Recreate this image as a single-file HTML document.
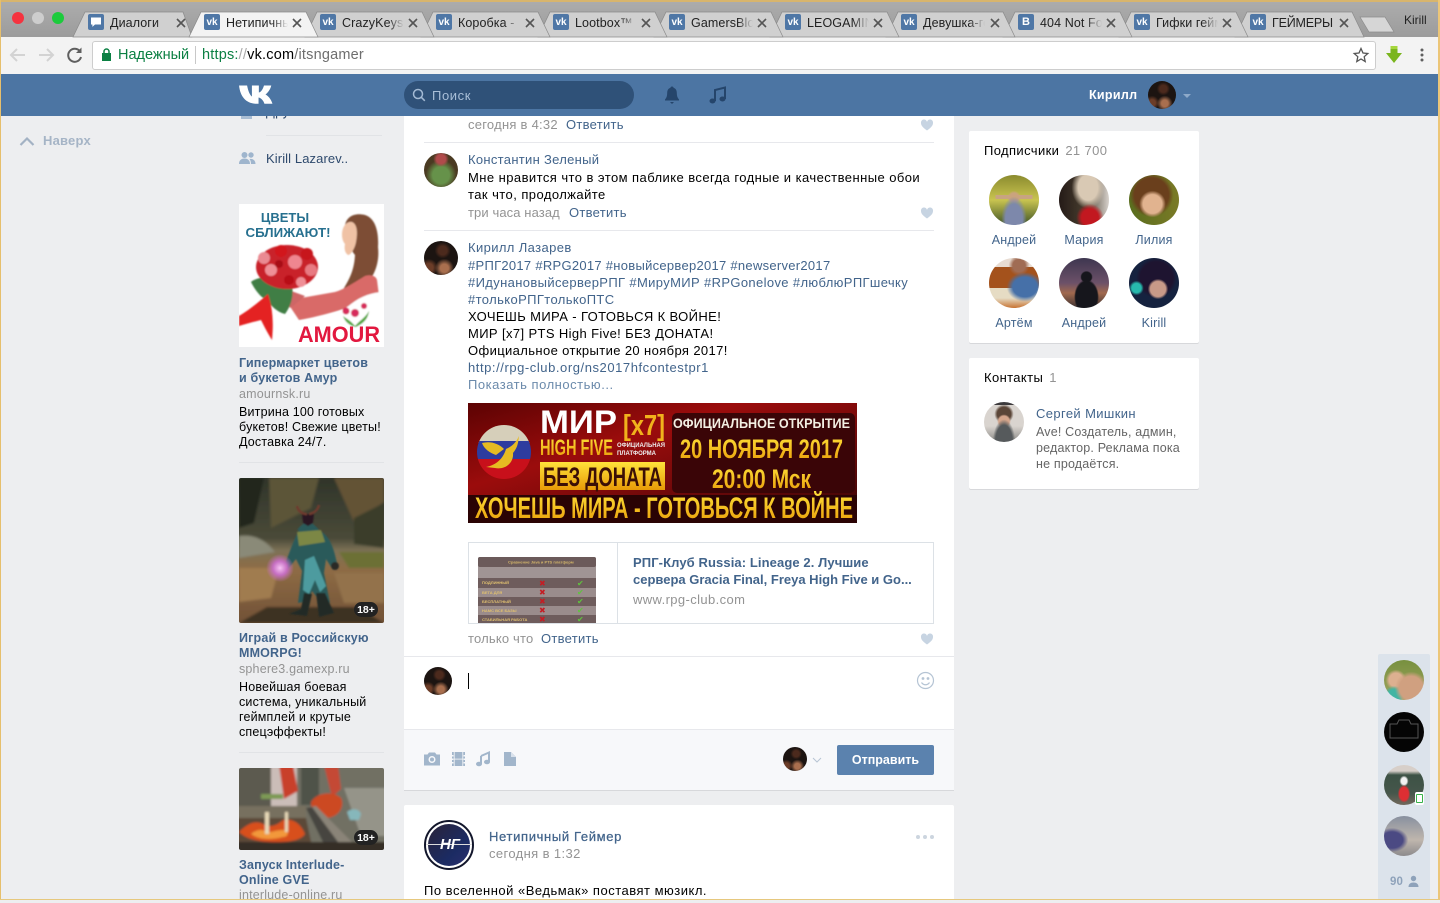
<!DOCTYPE html>
<html lang="ru"><head><meta charset="utf-8"><title>Нетипичный Геймер</title>
<style>
html,body{margin:0;padding:0}
body{width:1440px;height:900px;overflow:hidden;position:relative;background:#edeef0;font-family:"Liberation Sans","Noto Sans CJK SC",sans-serif;font-size:13px;color:#000}
.a{position:absolute}
.t{position:absolute;white-space:nowrap;line-height:16px;height:16px;letter-spacing:.38px}
.l{color:#42648b}.g{color:#939393}.b{font-weight:bold}
.t.b{letter-spacing:.05px}
.t.s{font-size:12.5px;letter-spacing:.18px}
.t.b.s{letter-spacing:.17px}
.tab{position:absolute;top:14px;font-size:12.5px;line-height:18px;color:#222;white-space:nowrap;overflow:hidden;width:62px;letter-spacing:.1px}
.tab:after{content:"";position:absolute;right:0;top:0;bottom:0;width:16px;background:linear-gradient(90deg,rgba(208,208,208,0),#d0d0d0)}
.tab.on:after{background:linear-gradient(90deg,rgba(243,243,243,0),#f3f3f3)}
.tab.full:after{display:none}
.fav{position:absolute;top:14px;width:16px;height:16px;border-radius:2px;background:#4f77a6;color:#fff;font-size:10px;font-weight:bold;line-height:17px;text-align:center}
.x{position:absolute;top:18px}
.av{position:absolute;border-radius:50%;overflow:hidden}
.me{background:radial-gradient(circle at 60% 80%,#a96f4e 0 12%,transparent 28%),radial-gradient(circle at 55% 28%,#4c2a1d 0 14%,transparent 26%),radial-gradient(circle at 15% 78%,#6c3d28 0 10%,transparent 22%),#1c1411}
.n{position:absolute;width:70px;text-align:center;line-height:16px;color:#42648b;font-size:12.5px;letter-spacing:.2px}
.hr{position:absolute;height:1px;background:#e7e8ec}
</style></head><body>

<!-- chrome -->
<div class="a" style="left:0;top:0;width:1440px;height:37px;background:linear-gradient(#adadad,#9c9c9c)"></div>
<div class="a" style="left:0;top:37px;width:1440px;height:37px;background:#f3f3f3"></div>
<svg class="a" style="left:0;top:0" width="1440" height="38">
<path d="M1369 32 1360 17H1385L1394 32Z" fill="#d6d6d6" stroke="#8c8c8c" stroke-width=".7"/>
<g fill="#d0d0d0" stroke="#8a8a8a" stroke-width=".7">
<path transform="translate(1235 12)" d="M0 25 12 0H117L129 25Z"/>
<path transform="translate(1119 12)" d="M0 25 12 0H117L129 25Z"/>
<path transform="translate(1003 12)" d="M0 25 12 0H117L129 25Z"/>
<path transform="translate(886 12)" d="M0 25 12 0H117L129 25Z"/>
<path transform="translate(770 12)" d="M0 25 12 0H117L129 25Z"/>
<path transform="translate(654 12)" d="M0 25 12 0H117L129 25Z"/>
<path transform="translate(538 12)" d="M0 25 12 0H117L129 25Z"/>
<path transform="translate(421 12)" d="M0 25 12 0H117L129 25Z"/>
<path transform="translate(305 12)" d="M0 25 12 0H117L129 25Z"/>
<path transform="translate(73 12)" d="M0 25 12 0H110L119 25Z"/>
<path transform="translate(189 12)" d="M0 25 12 0H117L129 25Z" fill="#f3f3f3"/>
</g>
<circle cx="18" cy="18" r="6" fill="#f5333f"/><circle cx="38" cy="18" r="6" fill="#cdcdcd"/><circle cx="58" cy="18" r="6" fill="#1ccb3c"/>
</svg>
<div class="fav" style="left:88px"><svg width="16" height="16"><path d="M3 3.5h10v7H7l-2.6 2.4V10.500H3Z" fill="#fff"/></svg></div>
<div class="fav" style="left:204px">vk</div><div class="fav" style="left:320px">vk</div><div class="fav" style="left:436px">vk</div><div class="fav" style="left:553px">vk</div><div class="fav" style="left:669px">vk</div><div class="fav" style="left:785px">vk</div><div class="fav" style="left:901px">vk</div><div class="fav" style="left:1018px;font-size:11px">В</div><div class="fav" style="left:1134px">vk</div><div class="fav" style="left:1250px">vk</div>
<div class="tab" style="left:110px">Диалоги</div>
<div class="tab on" style="left:226px">Нетипичный</div>
<div class="tab" style="left:342px">CrazyKeys</div>
<div class="tab" style="left:458px">Коробка - </div>
<div class="tab" style="left:575px">Lootbox™ M</div>
<div class="tab" style="left:691px">GamersBlog</div>
<div class="tab" style="left:807px">LEOGAMING</div>
<div class="tab" style="left:923px">Девушка-гей</div>
<div class="tab" style="left:1040px">404 Not Found</div>
<div class="tab" style="left:1156px">Гифки геймеры</div>
<div class="tab full" style="left:1272px;width:64px;letter-spacing:-.2px">ГЕЙМЕРЫ</div>
<svg class="x" style="left:176px" width="10" height="10"><path d="M1 1l8 8M9 1l-8 8" stroke="#555" stroke-width="1.600"/></svg>
<svg class="x" style="left:292px" width="10" height="10"><path d="M1 1l8 8M9 1l-8 8" stroke="#555" stroke-width="1.600"/></svg>
<svg class="x" style="left:408px" width="10" height="10"><path d="M1 1l8 8M9 1l-8 8" stroke="#555" stroke-width="1.600"/></svg>
<svg class="x" style="left:525px" width="10" height="10"><path d="M1 1l8 8M9 1l-8 8" stroke="#555" stroke-width="1.600"/></svg>
<svg class="x" style="left:641px" width="10" height="10"><path d="M1 1l8 8M9 1l-8 8" stroke="#555" stroke-width="1.600"/></svg>
<svg class="x" style="left:757px" width="10" height="10"><path d="M1 1l8 8M9 1l-8 8" stroke="#555" stroke-width="1.600"/></svg>
<svg class="x" style="left:873px" width="10" height="10"><path d="M1 1l8 8M9 1l-8 8" stroke="#555" stroke-width="1.600"/></svg>
<svg class="x" style="left:990px" width="10" height="10"><path d="M1 1l8 8M9 1l-8 8" stroke="#555" stroke-width="1.600"/></svg>
<svg class="x" style="left:1106px" width="10" height="10"><path d="M1 1l8 8M9 1l-8 8" stroke="#555" stroke-width="1.600"/></svg>
<svg class="x" style="left:1222px" width="10" height="10"><path d="M1 1l8 8M9 1l-8 8" stroke="#555" stroke-width="1.600"/></svg>
<svg class="x" style="left:1339px" width="10" height="10"><path d="M1 1l8 8M9 1l-8 8" stroke="#555" stroke-width="1.600"/></svg>
<div class="a" style="left:1404px;top:12px;font-size:12px;line-height:16px;color:#222">Kirill</div>
<svg class="a" style="left:0;top:37px" width="92" height="37" fill="none" stroke-width="2">
<path d="M25 18H11M17 12l-6 6 6 6" stroke="#d3d3d3"/><path d="M39 18H53M47 12l6 6-6 6" stroke="#d3d3d3"/>
<path d="M80 14.500A6.500 6.500 0 1 0 81 20" stroke="#5f5f5f"/><path d="M81.500 10.500v5.500h-5.500Z" fill="#5f5f5f"/>
</svg>
<div class="a" style="left:92px;top:41px;width:1282px;height:27px;background:#fff;border:1px solid #cdcdcd;border-radius:3px"></div>
<svg class="a" style="left:100px;top:47px" width="14" height="16"><rect x="2" y="6" width="9" height="8" fill="#0b8043"/><path d="M4 6V4.500a2.500 2.500 0 0 1 5 0V6" fill="none" stroke="#0b8043" stroke-width="1.500"/></svg>
<div class="a" style="left:118px;top:47px;line-height:16px;white-space:nowrap;font-size:14.5px;color:#0b8043">Надежный</div>
<div class="a" style="left:195px;top:46px;width:1px;height:18px;background:#c8c8c8"></div>
<div class="a" style="left:202px;top:47px;line-height:16px;white-space:nowrap;font-size:14.5px;letter-spacing:.2px;color:#5c5c5c"><span style="color:#0b8043">https:</span><span style="color:#aaa">//</span><span style="color:#000">vk.com</span><span style="color:#6e6e6e">/itsngamer</span></div>
<svg class="a" style="left:1352px;top:46px" width="18" height="18"><path d="M9 2.500l2 4.500 4.800.5-3.600 3.200 1 4.800L9 13l-4.200 2.500 1-4.800-3.600-3.200L7 7Z" fill="none" stroke="#555" stroke-width="1.300"/></svg>
<svg class="a" style="left:1385px;top:45px" width="18" height="20"><path d="M5.500 1h7v7H17L9 18 1 8h4.500Z" fill="#7ab51d"/><path d="M5.500 1h7v3h-7Z" fill="#a5d63d"/></svg>
<svg class="a" style="left:1419px;top:47px" width="6" height="16" fill="#5f5f5f"><circle cx="3" cy="3" r="1.500"/><circle cx="3" cy="8" r="1.500"/><circle cx="3" cy="13" r="1.500"/></svg>

<!-- vk header -->
<div class="a" style="left:0;top:74px;width:1440px;height:42px;background:#4c75a3"></div>
<svg class="a" style="left:238px;top:84px" width="36" height="21"><path transform="scale(1.07 1)" d="M1 1.500h7.500C9.500 7 11 11 13 12.500V1.500h6.500v7c2.200-.5 3.800-3.500 4.800-7h6.800c-1 4.500-3.600 7.500-5.400 9 2.200 1.200 5 4 6.500 9.200h-7.500c-1-3.300-3-5.600-5.500-6.200v6.200h-2.200C8 19.700 2 13 1 1.500Z" fill="#fff"/></svg>
<div class="a" style="left:404px;top:81px;width:230px;height:28px;border-radius:14px;background:#2f5178"></div>
<svg class="a" style="left:411px;top:87px" width="16" height="16" fill="none" stroke="#a3bad4" stroke-width="1.500"><circle cx="7" cy="7" r="4.500"/><path d="M10.300 10.300l3.500 3.500"/></svg>
<div class="t" style="left:432px;top:88px;color:#a9bfd8;letter-spacing:.6px">Поиск</div>
<svg class="a" style="left:662px;top:85px" width="20" height="20" fill="#25456b"><path d="M10 1.500c1 0 1.500.6 1.500 1.300 2.300.7 3.300 2.700 3.300 5.200 0 3 .8 5 2.200 6.500v1H3v-1c1.400-1.500 2.200-3.500 2.200-6.500 0-2.500 1-4.500 3.300-5.200 0-.7.500-1.300 1.500-1.300Z"/><path d="M8 17h4l-2 2Z"/></svg>
<svg class="a" style="left:708px;top:85px" width="20" height="20" fill="none" stroke="#25456b" stroke-width="2"><path d="M7 16V5l10-2.500V14"/><ellipse cx="4.500" cy="16" rx="3" ry="2.500" fill="#25456b" stroke="none"/><ellipse cx="14.500" cy="14" rx="3" ry="2.500" fill="#25456b" stroke="none"/></svg>
<div class="t b s" style="left:1089px;top:87px;color:#fff;letter-spacing:.3px">Кирилл</div>
<div class="av me" style="left:1148px;top:81px;width:28px;height:28px"></div>
<div class="a" style="left:1183px;top:94px;border:4px solid transparent;border-top:4px solid #8eaac9;border-bottom:0"></div>

<!-- left -->
<svg class="a" style="left:19px;top:136px" width="16" height="10" fill="none" stroke="#a3b2c4" stroke-width="2.200"><path d="M1.500 9L8 2.500 14.500 9"/></svg>
<div class="t b" style="left:43px;top:133px;color:#a5b4c6;letter-spacing:.2px">Наверх</div>
<div class="a" style="left:241px;top:116px;width:11px;height:3px;background:#a9bdd3"></div>
<div class="a" style="left:266px;top:116px;width:40px;height:3px;overflow:hidden"><div class="t" style="left:0;top:-12px;color:#2f4a6d">Друзья</div></div>
<div class="a" style="left:266px;top:135px;width:116px;height:1px;background:#e1e3e6"></div>
<svg class="a" style="left:239px;top:151px" width="17" height="14" fill="#9fb5cd"><circle cx="5.500" cy="4" r="3"/><circle cx="12" cy="4" r="2.700"/><path d="M0 13c0-3.500 2-5.500 5.500-5.500S11 9.500 11 13ZM12 13c0-2-.5-3.700-1.500-5 3.500-.7 6 1.500 6 5Z"/></svg>
<div class="t" style="left:266px;top:151px;color:#2f4a6d;letter-spacing:.1px">Kirill Lazarev..</div>

<!-- ad 1 -->
<svg class="a" style="left:239px;top:204px" width="145" height="143" viewBox="0 0 145 143" font-family="Liberation Sans,sans-serif">
<defs><filter id="bl" x="-5%" y="-5%" width="110%" height="110%"><feGaussianBlur stdDeviation=".7"/></filter></defs>
<rect width="145" height="143" fill="#fff"/>
<text x="46" y="18" font-size="13" font-weight="bold" fill="#27708f" text-anchor="middle">ЦВЕТЫ</text>
<text x="49" y="33" font-size="13" font-weight="bold" fill="#27708f" text-anchor="middle" textLength="85" lengthAdjust="spacingAndGlyphs">СБЛИЖАЮТ!</text>
<g filter="url(#bl)">
<path d="M106 28C104 14 114 8 126 11c10 3 14 16 13 32 2 18-5 32-16 42-10 6-18 8-22 6 8-14 14-22 15-40-3-4-8-10-10-23Z" fill="#7d4e34"/>
<path d="M103 31c0-9 5-14 10-13 5 2 6 10 4 20-1 6-5 13-8 13-3-2-4-6-3-11-2-2-3-6-3-9Z" fill="#f0c2a5"/>
<path d="M126 72c6-2 11 0 12 4l2 16-28 10c-14 6-40 12-52 14l-8-12 10-10 34-6c8-2 20-10 30-16Z" fill="#d96a68"/>
<path d="M44 84l22 8-14 12-14-8Z" fill="#ce6666"/>
<path d="M54 118c20-2 44-6 58-18 10-8 22-12 33-12v55H54Z" fill="#fff"/>
<path d="M12 78c6-6 30-8 40 0 4 12 0 24-6 32-8-2-14-8-18-14-6-2-12-10-16-18Z" fill="#3f7e45"/>
<ellipse cx="48" cy="63" rx="31" ry="22" fill="#c9202a"/>
<circle cx="25" cy="54" r="6" fill="#ea8a92"/><circle cx="42" cy="47" r="6" fill="#d2141e"/><circle cx="32" cy="66" r="6" fill="#ef8f96"/><circle cx="56" cy="58" r="7" fill="#ef8690"/><circle cx="68" cy="50" r="6" fill="#c7121d"/><circle cx="72" cy="66" r="6" fill="#e87a82"/><circle cx="50" cy="76" r="5" fill="#b81018"/><circle cx="62" cy="78" r="5" fill="#ef8f96"/><circle cx="40" cy="60" r="4" fill="#a80f17"/>
<path d="M0 112c10-6 20-14 29-22 4 12 6 26 4 46-5-8-8-14-11-20-8 2-16 4-22 6Z" fill="#e42321"/>
<g fill="#d72c5c"><circle cx="107" cy="107" r="3.500"/><circle cx="116" cy="109" r="4"/><circle cx="125" cy="102" r="3"/></g>
<path d="M104 112c4 3 8 5 12 10 4-5 10-8 14-15-1 9-7 13-13 16-6-1-11-5-13-11Z" fill="#53a83d"/>
</g>
<text x="59" y="138" font-size="22" font-weight="bold" fill="#e2183f" textLength="82" lengthAdjust="spacingAndGlyphs">AMOUR</text>
</svg>
<div class="t b s l" style="left:239px;top:355px">Гипермаркет цветов</div>
<div class="t b s l" style="left:239px;top:370px">и букетов Амур</div>
<div class="t s g" style="left:239px;top:386px">amournsk.ru</div>
<div class="t s" style="left:239px;top:404px">Витрина 100 готовых</div>
<div class="t s" style="left:239px;top:419px">букетов! Свежие цветы!</div>
<div class="t s" style="left:239px;top:434px">Доставка 24/7.</div>
<div class="a" style="left:239px;top:462px;width:145px;height:1px;background:#e1e3e6"></div>

<!-- ad 2 -->
<svg class="a" style="left:239px;top:478px;border-radius:2px" width="145" height="145" viewBox="0 0 145 145">
<defs><filter id="bl2" x="-5%" y="-5%" width="110%" height="110%"><feGaussianBlur stdDeviation="1.300"/></filter><linearGradient id="g1" x1="0" y1="0" x2="0" y2="1"><stop offset="0" stop-color="#2e3329"/><stop offset=".42" stop-color="#4a4a38"/><stop offset=".5" stop-color="#7c7156"/><stop offset=".62" stop-color="#8e6c45"/><stop offset="1" stop-color="#6f4f35"/></linearGradient><radialGradient id="g2"><stop offset="0" stop-color="#f7c2f3"/><stop offset=".5" stop-color="#c66fc2"/><stop offset="1" stop-color="#c66fc2" stop-opacity="0"/></radialGradient></defs>
<g filter="url(#bl2)">
<rect x="-4" y="-4" width="153" height="153" fill="url(#g1)"/>
<path d="M30 0h50l-8 30-40 20Z" fill="#5c5438"/><path d="M95 0h50v24l-30 20Z" fill="#635235"/><path d="M0 0h25L15 45 0 50Z" fill="#23271f"/>
<path d="M115 40l30-15v45l-30-4Z" fill="#3a3d2c"/>
<path d="M0 58c14-2 26 3 36 16L0 80Z" fill="#8a8a78"/><path d="M100 74h45v16H110Z" fill="#6c7035"/>
<path d="M0 90h40l-8 30-32 4Z" fill="#a07b50"/><path d="M95 95h50v30H105Z" fill="#93724b"/>
<path d="M0 145l28-16h90l27 16Z" fill="#3d3022"/>
</g>
<g filter="url(#bl)">
<path d="M58 52c4-5 8-8 11-8s7 3 12 9c7 3 12 12 15 24l2 8-4 7-7-11-2 14 6 30-10-2-8-10-4 10-10 2 4-32-6-12-8 10-4-3c5-12 10-27 15-36Z" fill="#2a5a5a"/>
<path d="M66 82l9-4 12 30-6 6-5-12-6 14-6-4Z" fill="#4e9b9f"/>
<path d="M58 54l24-2 4 12-26 4Z" fill="#7b8744"/><path d="M63 36h12l-1 9-5 3-5-3Z" fill="#2c1822"/>
<path d="M58 28c1 5 5 8 10 8M80 27c-1 5-5 8-10 9" stroke="#6e3b2d" stroke-width="2.500" fill="none"/>
<path d="M50 136l12-5 3-16 8 1-5 22ZM80 139l-3-24 9 0 9 20Z" fill="#232c27"/>
<circle cx="96" cy="88" r="4" fill="#2a2c28"/>
</g>
<circle cx="41" cy="90" r="14" fill="url(#g2)"/>
<rect x="115" y="124" width="24" height="15" rx="7.500" fill="#222"/><text x="127" y="135" font-family="Liberation Sans,sans-serif" font-size="10.500" font-weight="bold" fill="#fff" text-anchor="middle">18+</text>
</svg>
<div class="t b s l" style="left:239px;top:630px">Играй в Российскую</div>
<div class="t b s l" style="left:239px;top:645px">MMORPG!</div>
<div class="t s g" style="left:239px;top:661px">sphere3.gamexp.ru</div>
<div class="t s" style="left:239px;top:679px">Новейшая боевая</div>
<div class="t s" style="left:239px;top:694px">система, уникальный</div>
<div class="t s" style="left:239px;top:709px">геймплей и крутые</div>
<div class="t s" style="left:239px;top:724px">спецэффекты!</div>
<div class="a" style="left:239px;top:752px;width:145px;height:1px;background:#e1e3e6"></div>

<!-- ad 3 -->
<svg class="a" style="left:239px;top:768px;border-radius:2px" width="145" height="82" viewBox="0 0 145 82">
<defs><filter id="bl3" x="-5%" y="-5%" width="110%" height="110%"><feGaussianBlur stdDeviation="1.100"/></filter></defs>
<g filter="url(#bl3)">
<rect x="-3" y="-3" width="151" height="88" fill="#716f63"/>
<rect x="-3" y="-3" width="35" height="45" fill="#5c5a50"/><rect x="32" y="-3" width="26" height="44" fill="#cbbdb8"/><rect x="62" y="-3" width="18" height="40" fill="#50524a"/>
<path d="M40 -3h14l5 26-14 8Z" fill="#c8402c"/><path d="M85 -3h14l3 24-9 8Z" fill="#c44a36"/>
<path d="M72 34c5-9 22-12 30-4 4 8-2 20-16 20-8 0-14-6-14-16Z" fill="#cc4a20"/>
<path d="M105 20h45v48H122Z" fill="#959489"/><path d="M108 44c4-4 12-4 14 2l-2 6h-9Z" fill="#86b7bb"/>
<rect x="-3" y="38" width="70" height="12" fill="#77705f"/>
<path d="M-3 50h70l6 28H-3Z" fill="#5c4a38"/>
<path d="M0 64c8-8 16-12 24-8 6 3 12 3 20-4 10-2 18 4 22 14-4 6-14 8-28 8-16 0-30-2-38-10Z" fill="#d8501f"/>
<path d="M12 66c6-5 12-5 16-2 5 1 14-4 20-1 2 3 0 6-4 6-12 3-24 3-32-3Z" fill="#f2983a"/>
<path d="M26 44h4v22h-4ZM46 44h3v20h-3Z" fill="#e8d9b8"/>
<path d="M67 40l10-2 44 44H92Z" fill="#8a8478"/><path d="M67 40l6-1 32 43H88Z" fill="#46453f"/>
<path d="M-3 74h150v11H-3Z" fill="#352d26"/>
<rect x="22" y="26" width="22" height="5" fill="#7d9a55"/>
</g>
<rect x="115" y="62" width="24" height="15" rx="7.500" fill="#222"/><text x="127" y="73" font-family="Liberation Sans,sans-serif" font-size="10.500" font-weight="bold" fill="#fff" text-anchor="middle">18+</text>
</svg>
<div class="t b s l" style="left:239px;top:857px">Запуск Interlude-</div>
<div class="t b s l" style="left:239px;top:872px">Online GVE</div>
<div class="t s g" style="left:239px;top:887px">interlude-online.ru</div>

<!-- centre -->
<div class="a" style="left:404px;top:116px;width:550px;height:674px;background:#fff;box-shadow:0 1px 0 #d7d8db"></div>
<div class="t g" style="left:468px;top:117px;letter-spacing:.25px">сегодня в 4:32</div><div class="t l" style="left:566px;top:117px;letter-spacing:.28px">Ответить</div>
<div class="hr" style="left:424px;top:142px;width:510px"></div>
<div class="av" style="left:424px;top:153px;width:34px;height:34px;background:radial-gradient(circle at 50% 18%,#b04b4b 0 14%,transparent 24%),radial-gradient(circle at 50% 65%,#66924a 0 30%,transparent 55%),#4a3a22"></div>
<div class="t l" style="left:468px;top:152px;letter-spacing:.3px">Константин Зеленый</div>
<div class="t" style="left:468px;top:170px;letter-spacing:.44px">Мне нравится что в этом паблике всегда годные и качественные обои</div>
<div class="t" style="left:468px;top:187px;letter-spacing:.44px">так что, продолжайте</div>
<div class="t g" style="left:468px;top:205px;letter-spacing:.1px">три часа назад</div><div class="t l" style="left:569px;top:205px;letter-spacing:.28px">Ответить</div>
<div class="hr" style="left:424px;top:230px;width:510px"></div>
<div class="av me" style="left:424px;top:241px;width:34px;height:34px"></div>
<div class="t l" style="left:468px;top:240px">Кирилл Лазарев</div>
<div class="t l" style="left:468px;top:258px;letter-spacing:.28px">#РПГ2017 #RPG2017 #новыйсервер2017 #newserver2017</div>
<div class="t l" style="left:468px;top:275px;letter-spacing:.36px">#ИдунановыйсерверРПГ #МируМИР #RPGonelove #люблюРПГшечку</div>
<div class="t l" style="left:468px;top:292px">#толькоРПГтолькоПТС</div>
<div class="t" style="left:468px;top:309px">ХОЧЕШЬ МИРА - ГОТОВЬСЯ К ВОЙНЕ!</div>
<div class="t" style="left:468px;top:326px">МИР [x7] PTS High Five! БЕЗ ДОНАТА!</div>
<div class="t" style="left:468px;top:343px">Официальное открытие 20 ноября 2017!</div>
<div class="t l" style="left:468px;top:360px;letter-spacing:.56px">http://rpg-club.org/ns2017hfcontestpr1</div>
<div class="t" style="left:468px;top:377px;color:#6b8aab;letter-spacing:.52px">Показать полностью...</div>
<svg class="a" style="left:920px;top:118px" width="14" height="14" fill="#c7d4e2"><path d="M7 12.500C2 9 1 7 1 5a3 3 0 0 1 6-1 3 3 0 0 1 6 1c0 2-1 4-6 7.500Z"/></svg>
<svg class="a" style="left:920px;top:206px" width="14" height="14" fill="#c7d4e2"><path d="M7 12.500C2 9 1 7 1 5a3 3 0 0 1 6-1 3 3 0 0 1 6 1c0 2-1 4-6 7.500Z"/></svg>
<svg class="a" style="left:920px;top:632px" width="14" height="14" fill="#c7d4e2"><path d="M7 12.500C2 9 1 7 1 5a3 3 0 0 1 6-1 3 3 0 0 1 6 1c0 2-1 4-6 7.500Z"/></svg>

<!-- banner -->
<svg class="a" style="left:468px;top:403px" width="389" height="120" viewBox="0 0 389 120" font-family="Liberation Sans,sans-serif" font-weight="bold">
<defs><linearGradient id="bg" x1="0" x2="1" y1="0" y2="1"><stop offset="0" stop-color="#5c0303"/><stop offset=".35" stop-color="#9b0c0c"/><stop offset="1" stop-color="#370506"/></linearGradient>
<linearGradient id="yl" x1="0" x2="0" y1="0" y2="1"><stop offset="0" stop-color="#ffe23a"/><stop offset="1" stop-color="#e89a07"/></linearGradient>
<clipPath id="ball"><circle cx="36" cy="49" r="27"/></clipPath></defs>
<rect width="389" height="120" fill="url(#bg)"/>
<rect y="92" width="389" height="28" fill="#2a0304"/>
<rect x="204" y="10" width="183" height="80" rx="5" fill="#3a0507"/>
<g clip-path="url(#ball)"><rect x="9" y="22" width="54" height="18" fill="#d6cfba"/><rect x="9" y="38" width="54" height="18" fill="#2e3c9f"/><rect x="9" y="56" width="54" height="20" fill="#c8101b"/></g>
<path d="M18 64c10-2 17-8 20-18 5-2 10-6 13-13-1 9-2 12-6 17 1 10-8 17-18 15Z M14 40c8-2 16 0 22 6l-8 6c-6-2-12-6-14-12Z" fill="#e6bb22"/>
<text x="72" y="30" font-size="32" fill="#fff" textLength="77" lengthAdjust="spacingAndGlyphs">МИР</text>
<text x="155" y="32" font-size="29" fill="#f1b21c" textLength="42" lengthAdjust="spacingAndGlyphs">[x7]</text>
<text x="72" y="52" font-size="22" fill="url(#yl)" textLength="73" lengthAdjust="spacingAndGlyphs">HIGH FIVE</text>
<text x="149" y="44" font-size="6" fill="#eee" textLength="48" lengthAdjust="spacingAndGlyphs">ОФИЦИАЛЬНАЯ</text>
<text x="149" y="52" font-size="6" fill="#eee" textLength="39" lengthAdjust="spacingAndGlyphs">ПЛАТФОРМА</text>
<rect x="72" y="59" width="125" height="28" fill="url(#yl)"/>
<text x="75" y="83" font-size="27" fill="#3b0f06" textLength="119" lengthAdjust="spacingAndGlyphs">БЕЗ ДОНАТА</text>
<text x="205" y="25" font-size="14" fill="#f3efe3" textLength="177" lengthAdjust="spacingAndGlyphs">ОФИЦИАЛЬНОЕ ОТКРЫТИЕ</text>
<text x="212" y="55" font-size="27" fill="url(#yl)" textLength="163" lengthAdjust="spacingAndGlyphs">20 НОЯБРЯ 2017</text>
<text x="244" y="85" font-size="27" fill="url(#yl)" textLength="99" lengthAdjust="spacingAndGlyphs">20:00 Мск</text>
<text x="7" y="115" font-size="30" fill="url(#yl)" textLength="378" lengthAdjust="spacingAndGlyphs">ХОЧЕШЬ МИРА - ГОТОВЬСЯ К ВОЙНЕ</text>
</svg>

<!-- link card -->
<div class="a" style="left:468px;top:542px;width:464px;height:80px;border:1px solid #dce1e6"></div>
<div class="a" style="left:617px;top:543px;width:1px;height:80px;background:#dce1e6"></div>
<svg class="a" style="left:478px;top:557px" width="118" height="66" viewBox="0 0 118 66" font-family="Liberation Sans,DejaVu Sans,sans-serif" font-size="4" font-weight="bold">
<rect width="118" height="66" fill="#a09494" rx="2"/><rect width="118" height="10" fill="#6b5a5a" rx="2"/>
<text x="30" y="6.500" fill="#d4b66a">Сравнение Java и PTS платформ</text>
<rect y="21" width="118" height="10" fill="#6e5c5c"/><rect y="31" width="118" height="9" fill="#9a8c8c"/><rect y="40" width="118" height="9" fill="#6e5c5c"/><rect y="49" width="118" height="9" fill="#9a8c8c"/><rect y="58" width="118" height="8" fill="#6e5c5c"/>
<text x="4" y="27" fill="#e0c070">ПОДЛИННЫЙ</text><text x="4" y="37" fill="#e0c070">ВЕТА ДЛЯ</text><text x="4" y="46" fill="#e0c070">БЕСПЛАТНЫЙ</text><text x="4" y="55" fill="#e0c070">НАМС ВСЕ БАЗЫ</text><text x="4" y="64" fill="#e0c070">СТАБИЛЬНАЯ РАБОТА</text>
<g font-size="8" fill="#c41d24"><text x="61" y="29">✖</text><text x="61" y="38">✖</text><text x="61" y="47">✖</text><text x="61" y="56">✖</text><text x="61" y="65">✖</text></g>
<g font-size="8" fill="#5fc23e"><text x="99" y="29">✔</text><text x="99" y="38">✔</text><text x="99" y="47">✔</text><text x="99" y="56">✔</text><text x="99" y="65">✔</text></g>
</svg>
<div class="t b l" style="left:633px;top:555px;letter-spacing:.1px">РПГ-Клуб Russia: Lineage 2. Лучшие</div>
<div class="t b l" style="left:633px;top:572px;letter-spacing:0">сервера Gracia Final, Freya High Five и Go...</div>
<div class="t g" style="left:633px;top:592px">www.rpg-club.com</div>
<div class="t g" style="left:468px;top:631px;letter-spacing:.18px">только что</div><div class="t l" style="left:541px;top:631px;letter-spacing:.28px">Ответить</div>

<!-- composer -->
<div class="hr" style="left:404px;top:656px;width:550px"></div>
<div class="av me" style="left:424px;top:667px;width:28px;height:28px"></div>
<div class="a" style="left:468px;top:673px;width:1px;height:16px;background:#000"></div>
<svg class="a" style="left:916px;top:671px" width="19" height="19" fill="none" stroke="#b5c4d4" stroke-width="1.200"><circle cx="9.500" cy="9.500" r="8"/><path d="M5.500 11.500c2 3 6 3 8 0"/><circle cx="7" cy="7.500" r=".8" fill="#b5c4d4"/><circle cx="12" cy="7.500" r=".8" fill="#b5c4d4"/></svg>
<div class="a" style="left:404px;top:729px;width:550px;height:61px;background:#f7f8fa;border-top:1px solid #e7e8ec;box-sizing:border-box"></div>
<svg class="a" style="left:424px;top:750px" width="96" height="17" fill="#a2b6cb">
<path d="M0 4.500h3.500L5 2.500h6l1.500 2h3.500v11H0ZM8 6a3.500 3.500 0 1 0 0 7 3.500 3.500 0 0 0 0-7Z" fill-rule="evenodd"/><circle cx="8" cy="9.500" r="2"/>
<path d="M28 2h13v14H28Z"/><g fill="#f7f8fa"><rect x="30.500" y="8.700" width="8" height=".8"/><rect x="29.800" y="2" width=".8" height="14"/><rect x="38.400" y="2" width=".8" height="14"/><rect x="28" y="5" width="1.500" height="1.500"/><rect x="28" y="8.500" width="1.500" height="1.500"/><rect x="28" y="12" width="1.500" height="1.500"/><rect x="39.500" y="5" width="1.500" height="1.500"/><rect x="39.500" y="8.500" width="1.500" height="1.500"/><rect x="39.500" y="12" width="1.500" height="1.500"/></g>
<path d="M57 6v8M57 6l8-3.500V12" stroke="#a2b6cb" stroke-width="2" fill="none"/><ellipse cx="55" cy="14" rx="3" ry="2.300"/><ellipse cx="63" cy="12" rx="3" ry="2.300"/>
<path d="M80 2h7l5 5v9H80Z"/><path d="M87 2v5h5Z" fill="#d9e2ec"/>
</svg>
<div class="av me" style="left:783px;top:747px;width:24px;height:24px"></div>
<svg class="a" style="left:812px;top:757px" width="10" height="7" fill="none" stroke="#b8c5d3"><path d="M1 1l4 4 4-4"/></svg>
<div class="a" style="left:837px;top:745px;width:97px;height:30px;background:#5b82ae;border-radius:2px;color:#fff;font-weight:bold;font-size:12.5px;line-height:30px;text-align:center">Отправить</div>

<!-- next post -->
<div class="a" style="left:404px;top:805px;width:550px;height:95px;background:#fff;border-radius:2px 2px 0 0"></div>
<div class="av" style="left:424px;top:820px;width:50px;height:50px;background:#fff;border:2px solid #12162b;box-sizing:border-box">
<div class="a" style="left:2px;top:2px;width:42px;height:42px;border-radius:50%;background:linear-gradient(135deg,#2a2338,#1b2b63 65%,#2b2f6e)"></div>
<div class="a" style="left:0;top:22px;width:46px;height:1px;background:#ddd"></div>
<div class="a" style="left:12px;top:15px;width:24px;text-align:center;color:#fff;font:italic bold 15px/16px 'Liberation Sans',sans-serif">НГ</div></div>
<div class="t l" style="left:489px;top:829px;letter-spacing:.65px;-webkit-text-stroke:.25px #42648b">Нетипичный Геймер</div>
<div class="t g" style="left:489px;top:846px">сегодня в 1:32</div>
<svg class="a" style="left:915px;top:834px" width="20" height="6" fill="#ccd5df"><circle cx="3" cy="3" r="2"/><circle cx="10" cy="3" r="2"/><circle cx="17" cy="3" r="2"/></svg>
<div class="t" style="left:424px;top:883px;letter-spacing:.5px">По вселенной «Ведьмак» поставят мюзикл.</div>

<!-- right -->
<div class="a" style="left:969px;top:131px;width:230px;height:212px;background:#fff;border-radius:2px;box-shadow:0 1px 0 #d7d8db"></div>
<div class="t" style="left:984px;top:143px">Подписчики <span class="g" style="margin-left:2px">21 700</span></div>
<div class="av" style="left:989px;top:175px;width:50px;height:50px;background:radial-gradient(ellipse at 50% 88%,#7d88ab 0 24%,transparent 36%),radial-gradient(circle at 50% 45%,#caa37e 0 12%,transparent 18%),linear-gradient(90deg,transparent 12%,#c8a481 14% 86%,transparent 88%) 0 20px/100% 4px no-repeat,linear-gradient(#8b8b2e,#c9c450 50%,#3f5426)"></div>
<div class="av" style="left:1059px;top:175px;width:50px;height:50px;background:radial-gradient(circle at 62% 85%,#c21820 0 16%,transparent 26%),radial-gradient(ellipse at 58% 25%,#d9c9b4 0 24%,transparent 40%),linear-gradient(90deg,#241a17,#4a4030 55%,#d8d2cc)"></div>
<div class="av" style="left:1129px;top:175px;width:50px;height:50px;background:radial-gradient(circle at 47% 58%,#e1b38f 0 24%,transparent 34%),radial-gradient(circle at 45% 40%,#6a3f1c 0 42%,transparent 54%),linear-gradient(90deg,#596d1e,#7a7a26)"></div>
<div class="av" style="left:989px;top:258px;width:50px;height:50px;background:radial-gradient(ellipse at 72% 58%,#4670a8 0 24%,transparent 36%),radial-gradient(circle at 60% 15%,#a06c54 0 12%,transparent 20%),linear-gradient(#e8dcd2 0 18%,#a4521c 18% 60%,#e6dcc4 60% 80%,#c77332)"></div>
<div class="av" style="left:1059px;top:258px;width:50px;height:50px;background:radial-gradient(ellipse at 55% 78%,#16161c 0 28%,transparent 32%),radial-gradient(circle at 55% 38%,#16161c 0 12%,transparent 15%),linear-gradient(#3e3650,#6c5168 50%,#a1694e 70%,#3a3030)"></div>
<div class="av" style="left:1129px;top:258px;width:50px;height:50px;background:radial-gradient(circle at 58% 62%,#c89a88 0 18%,transparent 24%),radial-gradient(circle at 15% 60%,#27b9ad 0 9%,transparent 14%),radial-gradient(circle at 55% 40%,#1e1430 0 40%,transparent 50%),#15223f"></div>
<div class="n" style="left:979px;top:232px">Андрей</div><div class="n" style="left:1049px;top:232px">Мария</div><div class="n" style="left:1119px;top:232px">Лилия</div>
<div class="n" style="left:979px;top:315px">Артём</div><div class="n" style="left:1049px;top:315px">Андрей</div><div class="n" style="left:1119px;top:315px">Kirill</div>
<div class="a" style="left:969px;top:358px;width:230px;height:131px;background:#fff;border-radius:2px;box-shadow:0 1px 0 #d7d8db"></div>
<div class="t" style="left:984px;top:370px">Контакты <span class="g" style="margin-left:2px">1</span></div>
<div class="av" style="left:984px;top:402px;width:40px;height:40px;background:radial-gradient(ellipse at 50% 100%,#565a5c 0 30%,transparent 40%),radial-gradient(circle at 50% 48%,#d5a68c 0 18%,transparent 24%),radial-gradient(circle at 50% 30%,#5b4638 0 20%,transparent 28%),linear-gradient(#3c3a3c 0 8%,#d9d4cf 8% 60%,#8b8a86)"></div>
<div class="t l" style="left:1036px;top:406px">Сергей Мишкин</div>
<div class="t s" style="left:1036px;top:424px;color:#656565">Ave! Создатель, админ,</div>
<div class="t s" style="left:1036px;top:440px;color:#656565">редактор. Реклама пока</div>
<div class="t s" style="left:1036px;top:456px;color:#656565">не продаётся.</div>

<!-- chat bar -->
<div class="a" style="left:1378px;top:654px;width:52px;height:246px;background:#dce3eb;border-radius:2px 2px 0 0"></div>
<div class="av" style="left:1384px;top:660px;width:40px;height:40px;background:radial-gradient(circle at 68% 70%,#d0a080 0 30%,transparent 42%),radial-gradient(circle at 25% 90%,#42b5a3 0 14%,transparent 22%),radial-gradient(circle at 30% 50%,#ddb090 0 20%,transparent 30%),linear-gradient(#77903f,#a0a560)"></div>
<div class="av" style="left:1384px;top:712px;width:40px;height:40px;background:#050505"><svg width="40" height="40" fill="none" stroke="#555"><path d="M6 12h7l2-4h10l2 4h7v14H6Z"/></svg></div>
<div class="av" style="left:1384px;top:765px;width:40px;height:40px;background:radial-gradient(ellipse at 50% 72%,#de2f33 0 16%,transparent 22%),radial-gradient(ellipse at 50% 40%,#f2f2f2 0 10%,transparent 16%),linear-gradient(#d7cfc9 0 15%,#3d5245 25%,#45564b 70%,#72685c)"></div>
<div class="a" style="left:1415px;top:792px;width:9px;height:13px;background:#fff;border-radius:2px"><div class="a" style="left:1px;top:2px;width:5px;height:7px;border:1px solid #38b24a;border-radius:1px"></div></div>
<div class="av" style="left:1384px;top:816px;width:40px;height:40px;background:radial-gradient(ellipse at 20% 60%,#4b4a83 0 24%,transparent 36%),linear-gradient(#88909f,#bfb6ad 60%,#8c8a8c)"></div>
<div class="t b" style="left:1390px;top:874px;font-size:11.5px;color:#8ea2ba">90</div>
<svg class="a" style="left:1408px;top:875px" width="11" height="13" fill="#8ea2ba"><circle cx="5.500" cy="3.500" r="2.700"/><path d="M.5 12c0-3 2-4.500 5-4.500s5 1.500 5 4.500Z"/></svg>

<!-- frame -->
<div class="a" style="left:0;top:0;width:1440px;height:2px;background:#d8b56d"></div>
<div class="a" style="left:0;top:0;width:1px;height:900px;background:#e6bf6c"></div>
<div class="a" style="left:1438px;top:0;width:2px;height:900px;background:#ecc678"></div>
<div class="a" style="left:0;top:899px;width:1440px;height:1px;background:#e6c87e"></div>
</body></html>
